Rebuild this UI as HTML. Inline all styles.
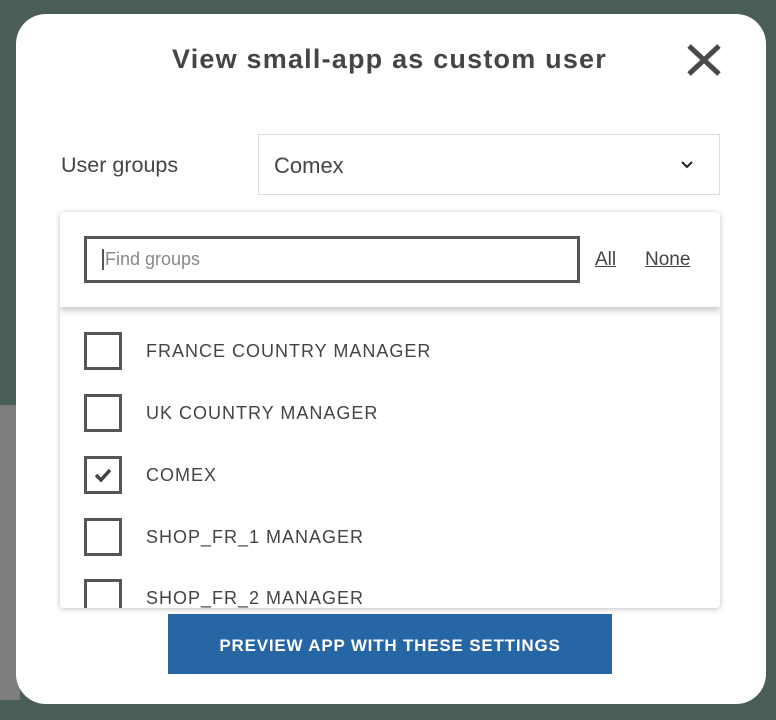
<!DOCTYPE html>
<html><head><style>
body{margin:0;width:776px;height:720px;background:#4b5e55;position:relative;overflow:hidden;font-family:"Liberation Sans",sans-serif;color:#444}
.strip{position:absolute;left:0;top:405px;width:20px;height:295px;background:#7d7d7d}
.modal{position:absolute;left:16px;top:14px;width:750px;height:690px;background:#fff;border-radius:30px}
.title{position:absolute;left:172px;top:44px;font-size:27px;font-weight:bold;color:#454545;letter-spacing:1.2px}
.x{position:absolute;left:686px;top:44px;width:36px;height:32px}
.lbl{position:absolute;left:61px;top:153px;font-size:21.5px;color:#454545}
.sel{position:absolute;left:258px;top:134px;width:462px;height:61px;border:1px solid #ddd;box-sizing:border-box}
.sel span{position:absolute;left:15px;top:18px;font-size:22px;color:#454545}
.panel{position:absolute;left:60px;top:212px;width:660px;height:396px;background:#fff;border-radius:4px;box-shadow:0 1px 6px rgba(0,0,0,.25);overflow:hidden}
.head{position:absolute;left:0;top:0;width:660px;height:95px;background:#fff;box-shadow:0 4px 6px rgba(0,0,0,.2);z-index:2}
.search{position:absolute;left:24px;top:24px;width:496px;height:47px;border:3px solid #555;box-sizing:border-box}
.search span{position:absolute;left:15px;top:10px;font-size:18px;color:#888;border-left:2px solid #555;padding-left:1px;line-height:21px}
.lnk{position:absolute;top:37px;font-size:19px;color:#444;text-decoration:underline}
.row{position:absolute;left:24px;height:38px}
.cb{position:absolute;left:0;top:0;width:38px;height:38px;border:3px solid #555;box-sizing:border-box}
.row span{position:absolute;left:62px;top:9px;font-size:18px;letter-spacing:1px;color:#444;white-space:nowrap}
.btn{position:absolute;left:168px;top:614px;width:444px;height:60px;background:#2766a5;color:#fff;font-weight:bold;font-size:17px;letter-spacing:0.8px;text-align:center;line-height:63px}
</style></head><body>
<div class="strip"></div>
<div class="modal"></div>
<div class="title">View small-app as custom user</div>
<svg class="x" viewBox="0 0 36 32"><path d="M3 2L33 30M33 2L3 30" stroke="#4a4a4a" stroke-width="5"/></svg>
<div class="lbl">User groups</div>
<div class="sel"><span>Comex</span><svg style="position:absolute;left:421px;top:25px" width="14" height="10" viewBox="0 0 14 10"><path d="M2 2L7 7L12 2" stroke="#222" stroke-width="2" fill="none"/></svg></div>
<div class="panel">
<div class="head"><div class="search"><span>Find groups</span></div>
<div class="lnk" style="left:535px">All</div><div class="lnk" style="left:585px">None</div></div>
<div class="row" style="top:120px"><div class="cb"></div><span>FRANCE COUNTRY MANAGER</span></div>
<div class="row" style="top:182px"><div class="cb"></div><span>UK COUNTRY MANAGER</span></div>
<div class="row" style="top:244px"><div class="cb"><svg width="32" height="32" viewBox="0 0 32 32"><path d="M9 16L14 21L23 11" stroke="#444" stroke-width="3.5" fill="none"/></svg></div><span>COMEX</span></div>
<div class="row" style="top:306px"><div class="cb"></div><span>SHOP_FR_1 MANAGER</span></div>
<div class="row" style="top:367px"><div class="cb"></div><span>SHOP_FR_2 MANAGER</span></div>
</div>
<div class="btn">PREVIEW APP WITH THESE SETTINGS</div>
</body></html>
